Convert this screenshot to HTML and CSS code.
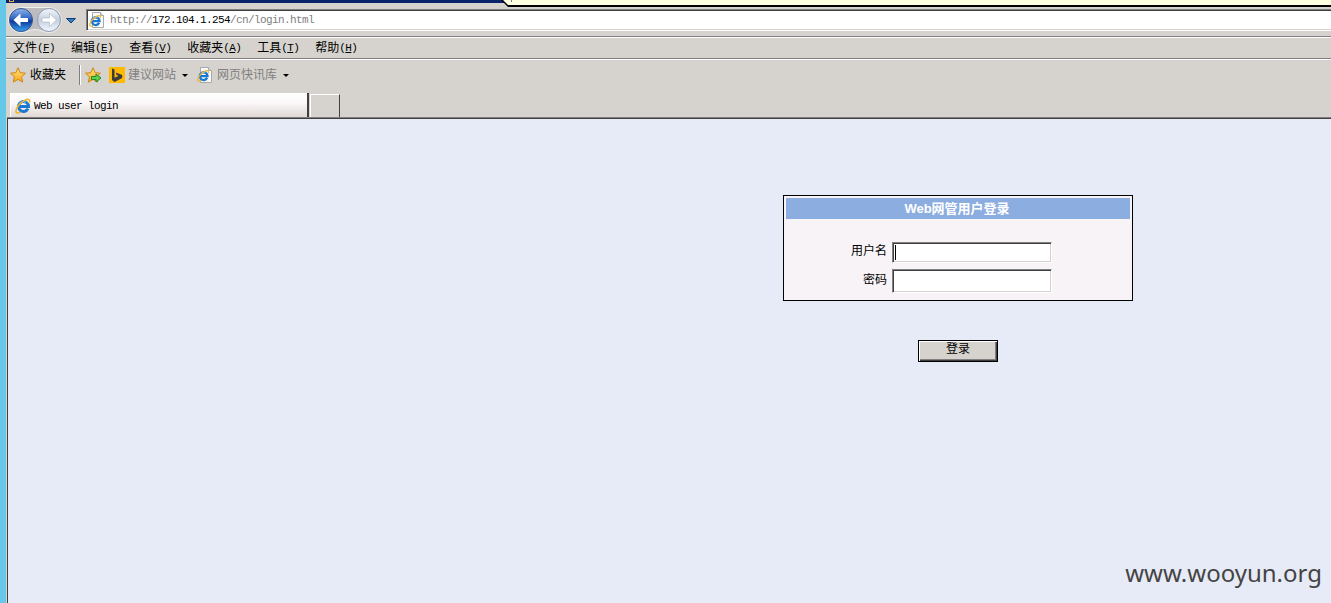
FILE: index.html
```
<!DOCTYPE html>
<html lang="zh-CN">
<head>
  <meta charset="UTF-8">
  <title>Web user login</title>
  <link rel="stylesheet" href="styles.css">
</head>
<body>

<!-- shared icons -->
<svg class="defs" width="0" height="0">
  <defs>
    <linearGradient id="blue" x1="0" y1="0" x2="0" y2="1">
      <stop offset="0" stop-color="#8fb4ea"/>
      <stop offset=".45" stop-color="#2e62c0"/>
      <stop offset=".55" stop-color="#0b3a9c"/>
      <stop offset="1" stop-color="#38a4f0"/>
    </linearGradient>
    <linearGradient id="pale" x1="0" y1="0" x2="0" y2="1">
      <stop offset="0" stop-color="#f4f7fb"/>
      <stop offset=".5" stop-color="#c3cfdf"/>
      <stop offset="1" stop-color="#f2f8ff"/>
    </linearGradient>
    <linearGradient id="gold" x1="0" y1="0" x2="0" y2="1">
      <stop offset="0" stop-color="#ffe680"/>
      <stop offset="1" stop-color="#f9a51a"/>
    </linearGradient>
    <symbol id="ie" viewBox="0 0 16 16">
      <path d="M13 10.700A5 5 0 1 1 13.500 8.500H4.500" fill="none" stroke="#1b78d0" stroke-width="3"/>
      <path d="M4 6.500A5 5 0 0 1 11 4.300" fill="none" stroke="#62bdf5" stroke-width="1.200"/>
      <path d="M14.500 4.600C15.400 1.500 13.400.4 9.600 2.400 4.600 5 .2 11 1.100 14.100c.5 1.300 2.500 1 4.400 0" fill="none" stroke="#f2b430" stroke-width="1.600"/>
    </symbol>
    <symbol id="page" viewBox="0 0 16 16">
      <path d="M3.500.5h8l3 3v12h-11z" fill="#fafafa" stroke="#a8a8a8"/>
      <path d="M11.500.5v3h3" fill="#ddd" stroke="#a8a8a8"/>
      <use href="#ie" x="0" y="2.500" width="12.500" height="12.500"/>
    </symbol>
    <symbol id="star" viewBox="0 0 16 16">
      <path d="M8 .8l2.200 4.900 5.200.5-3.900 3.600 1.200 5.300L8 12.400l-4.700 2.700 1.200-5.300L.6 6.200l5.200-.5z" fill="url(#gold)" stroke="#cf8512"/>
    </symbol>
  </defs>
</svg>

<div class="window">
  <div class="titlebar"><span class="title-icon"></span><div class="tip"><i></i></div></div>

  <div class="navbar">
    <svg class="nav-buttons" width="72" height="30" viewBox="0 0 72 30">
      <path d="M15 2.500h28a12.500 12.500 0 0 1 0 25c-6 0-8-3-14-3s-8 3-14 3a12.500 12.500 0 0 1 0-25z" fill="#bcbcc0" stroke="#f0f0f0"/>
      <circle cx="15" cy="15" r="11.500" fill="url(#blue)" stroke="#3a5690"/>
      <path d="M7.500 15l7-6.500v4.500H22v4h-7.500v4.500z" fill="#fff"/>
      <circle cx="43" cy="15" r="11.500" fill="url(#pale)" stroke="#8f9bb0"/>
      <path d="M50.500 15l-7-6.500v4.500H36v4h7.500v4.500z" fill="#fff" stroke="#aab4c2" stroke-width=".6"/>
      <path d="M60.500 13.500h9l-4.500 4.500z" fill="#2f7fc4" stroke="#143c78"/>
    </svg>
    <div class="address">
      <svg width="16" height="16"><use href="#page"/></svg>
      <span class="url">http://<b>172.104.1.254</b>/cn/login.html</span>
    </div>
  </div>

  <div class="menubar">
    <span>文件<em>(<u>F</u>)</em></span>
    <span>编辑<em>(<u>E</u>)</em></span>
    <span>查看<em>(<u>V</u>)</em></span>
    <span>收藏夹<em>(<u>A</u>)</em></span>
    <span>工具<em>(<u>T</u>)</em></span>
    <span>帮助<em>(<u>H</u>)</em></span>
  </div>

  <div class="favbar">
    <svg width="16" height="16"><use href="#star"/></svg>
    <span class="fav-title">收藏夹</span>
    <span class="sep"></span>
    <svg width="17" height="16" viewBox="0 0 17 16">
      <use href="#star" width="16" height="16"/>
      <path d="M6.500 9.500h4.500V7l5 4-5 4v-2.500H6.500z" fill="#5fd04a" stroke="#1f8a28"/>
    </svg>
    <svg class="bing" width="16" height="16" viewBox="0 0 16 16">
      <rect width="16" height="16" fill="#ffb900"/>
      <path d="M3 1.500l2.500 1v8.200L9.500 9 7.700 8 6.800 5.500l6.400 2.500v3L5.500 15 3 13z" fill="#3c3c3c"/>
    </svg>
    <span class="fav-link">建议网站</span>
    <i class="arrow"></i>
    <svg class="feed" width="16" height="16"><use href="#page"/></svg>
    <span class="fav-link">网页快讯库</span>
    <i class="arrow"></i>
  </div>

  <div class="tabs">
    <div class="tab">
      <svg width="16" height="16"><use href="#ie"/></svg>
      <span>Web user login</span>
    </div>
    <div class="new-tab"></div>
  </div>

  <div class="content">
    <form class="login" onsubmit="return false">
      <div class="panel">
        <div class="panel-title">Web网管用户登录</div>
        <div class="row">
          <label for="user">用户名</label>
          <div class="field"><input id="user" type="text"><i class="caret"></i></div>
        </div>
        <div class="row row-pass">
          <label for="pass">密码</label>
          <div class="field"><input id="pass" type="password"></div>
        </div>
      </div>
      <button class="submit">登录</button>
    </form>
    <div class="watermark">www.wooyun.org</div>
  </div>
</div>

</body>
</html>
```
FILE: styles.css
```
* {
  box-sizing: border-box;
}

body {
  margin: 0;
  height: 603px;
  overflow: hidden;
  background: #65c8e8;
  font-family: "Liberation Sans", "Noto Sans CJK SC", sans-serif;
  font-size: 12px;
  line-height: 14px;
  color: #000;
}

svg {
  display: block;
  flex: none;
}

.defs {
  position: absolute;
}

.window {
  margin-left: 6px;
  height: 603px;
  display: flex;
  flex-direction: column;
  background: #d6d3ce;
}

/* title bar, partly covered by a tooltip */
.titlebar {
  height: 3px;
  flex: none;
  background: #0a246a;
  position: relative;
}

.title-icon {
  display: block;
  width: 5px;
  height: 2px;
  margin-left: 3px;
  border: 1px solid #e0b050;
  border-top: 0;
}

.tip {
  position: absolute;
  top: 0;
  left: 495px;
  right: 0;
  height: 7px;
  background: #000;
  clip-path: polygon(0 0, 100% 0, 100% 100%, 7px 100%);
  z-index: 1;
}

.tip::before {
  content: "";
  display: block;
  height: 5px;
  background: #ffffe1;
  clip-path: polygon(2px 0, 100% 0, 100% 100%, 7px 100%);
}

.tip i {
  position: absolute;
  left: 10px;
  top: 0;
  width: 1px;
  height: 2px;
  background: #808080;
}

.navbar {
  height: 34px;
  flex: none;
  display: flex;
  align-items: flex-start;
  border-bottom: 1px solid #808080;
}

.nav-buttons {
  margin-top: 2px;
}

.address {
  flex: 1;
  height: 22px;
  margin: 6px 0 0 8px;
  display: flex;
  align-items: center;
  gap: 5px;
  padding-left: 2px;
  background: #fff;
  border-top: 1px solid #808080;
  border-left: 1px solid #808080;
  border-bottom: 1px solid #fff;
  box-shadow: inset 1px 1px #404040, inset 0 -1px #d6d3ce;
}

.url,
.tab span,
.menubar em {
  font-family: "Liberation Mono", monospace;
  font-size: 11px;
  letter-spacing: -0.6px;
  font-style: normal;
  white-space: pre;
}

.url {
  color: #808080;
}

.url b {
  font-weight: normal;
  color: #000;
}

.menubar {
  height: 22px;
  flex: none;
  display: flex;
  align-items: center;
  gap: 16px;
  padding-left: 7px;
  border-top: 1px solid #fff;
  border-bottom: 1px solid #808080;
}

.menubar em {
  vertical-align: 1px;
  line-height: 12px;
}

.favbar {
  height: 34px;
  flex: none;
  display: flex;
  align-items: center;
  padding: 0 0 3px 4px;
  border-top: 1px solid #fff;
}

.fav-title {
  width: 37px;
  margin-left: 4px;
}

.sep {
  width: 2px;
  height: 20px;
  margin: 0 4px 0 12px;
  background: #808080;
  border-right: 1px solid #fff;
}

.bing {
  margin: 0 3px 0 7px;
}

.fav-link {
  color: #808080;
}

.arrow {
  border: 3px solid transparent;
  border-top-color: #000;
  border-bottom: 0;
  margin-left: 6px;
}

.feed {
  margin: 0 4px 0 9px;
}

.tabs {
  height: 25px;
  flex: none;
  display: flex;
  align-items: flex-end;
  padding-left: 4px;
}

.tab {
  width: 299px;
  height: 25px;
  display: flex;
  align-items: center;
  gap: 3px;
  padding-left: 4px;
  border-left: 1px solid #fff;
  border-right: 2px solid #404040;
  background: linear-gradient(#fff, #fbf7f8 40%, #ddd7d2);
}

.new-tab {
  width: 30px;
  height: 24px;
  margin-left: 1px;
  border: 1px solid #fff;
  border-right: 1px solid #404040;
  border-bottom: 0;
}

.content {
  flex: 1;
  margin-left: 1px;
  position: relative;
  overflow: hidden;
  background: #e7ebf7;
  border-left: 1px solid #404040;
  border-top: 1px solid #404040;
  box-shadow: 0 -1px #808080;
}

/* the page is wider than the visible part of the window */
.login {
  width: 1900px;
  padding-top: 76px;
  display: flex;
  flex-direction: column;
  align-items: center;
}

.panel {
  width: 350px;
  height: 106px;
  padding: 2px;
  border: 1px solid #000;
  background: #f7f3f7;
}

.panel-title {
  height: 21px;
  width: 344px;
  padding-right: 2px;
  margin-bottom: 23px;
  background: #8caddf;
  color: #fff;
  font-size: 13px;
  font-weight: bold;
  line-height: 21px;
  text-align: center;
}

.row {
  display: flex;
  height: 21px;
  margin-bottom: 6px;
}

.row label {
  width: 101px;
  margin-right: 5px;
  text-align: right;
  line-height: 18px;
}

.row-pass {
  height: 24px;
}

.row-pass label {
  line-height: 22px;
}

.field {
  position: relative;
  display: flex;
  width: 160px;
}

.field input {
  width: 160px;
  padding: 1px;
  background: #fff;
  border: 1px solid #fff;
  border-top-color: #808080;
  border-left-color: #808080;
  box-shadow: inset 1px 1px #404040, inset -1px -1px #d6d3ce;
  outline: none;
}

.caret {
  position: absolute;
  left: 3px;
  top: 3px;
  width: 1px;
  height: 15px;
  background: #000;
}

.submit {
  width: 80px;
  height: 22px;
  margin-top: 39px;
  padding: 0 0 4px;
  font: inherit;
  line-height: 14px;
  color: #000;
  background: #d6d3ce;
  border: 1px solid #000;
  border-radius: 0;
  box-shadow: inset 1px 1px #fff, inset -1px -1px #404040, inset -2px -2px #808080;
}

.watermark {
  position: absolute;
  right: 9px;
  bottom: 13px;
  font-family: "Noto Sans", sans-serif;
  font-size: 24px;
  line-height: 34px;
  color: #444;
}
```
